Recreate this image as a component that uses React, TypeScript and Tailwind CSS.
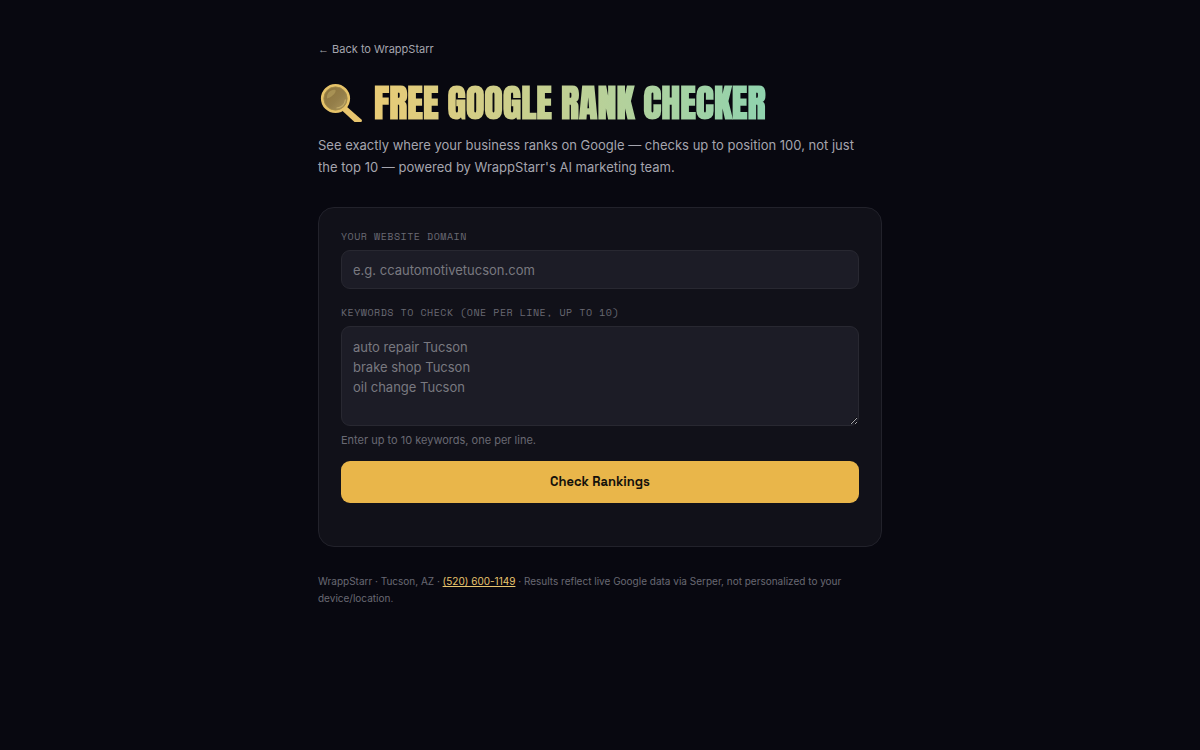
import React, { useState } from 'react';

const fieldClass =
  'block w-full rounded-[9px] border border-[#282831] bg-[#1c1c26] px-[11px] text-[13px] leading-5 text-[#f0f0f5] outline-none placeholder:text-[#797980] focus:border-[#e9b64a]';

const labelClass =
  "block text-[10px] leading-4 tracking-wider uppercase text-[#696973] font-['Space_Mono','Liberation_Mono',monospace]";

function MagnifierIcon() {
  return (
    <svg width="44" height="40" viewBox="0 0 44 40" className="shrink-0" aria-hidden="true">
      <defs>
        <linearGradient id="lens" x1="0" y1="0" x2="1" y2="1">
          <stop offset="0" stopColor="#8b7138" />
          <stop offset="0.55" stopColor="#947e49" />
          <stop offset="1" stopColor="#b19a60" />
        </linearGradient>
      </defs>
      <path d="M24 27.500 28.500 23.500 44 37 43.500 39 36.500 39Z" fill="#e8c56e" />
      <circle cx="17.5" cy="15.5" r="13.2" fill="url(#lens)" stroke="#e6c369" strokeWidth="2.8" />
      <circle cx="17.5" cy="15.5" r="11.6" fill="none" stroke="#a28b4d" strokeWidth="0.8" />
      <path d="M9 15.500c-1-5 4-9.500 8.500-8.500 1 3-4.500 7.500-8.500 8.500Z" fill="#b7a261" opacity="0.6" />
      <path d="M18.500 25c4.500 0 8.500-3 9-8.500" fill="none" stroke="#c1aa69" strokeWidth="1.2" />
    </svg>
  );
}

export default function App() {
  const [domain, setDomain] = useState('');
  const [keywords, setKeywords] = useState('');

  return (
    <div className="min-h-screen bg-[#080810] font-['Inter',sans-serif] text-[#f0f0f5]">
      <main className="mx-auto max-w-[600px] px-[18px] pt-10 pb-16">
        <a href="#" className="block w-fit text-[11px] leading-[18px] text-[#a5a5ae]">
          <span className="font-['Liberation_Sans',sans-serif]">←</span> Back to WrappStarr
        </a>

        <h1 className="mt-5 flex h-[50px] w-fit items-center gap-3 whitespace-nowrap">
          <MagnifierIcon />
          <span className="bg-linear-to-r from-[#e8cb76] to-[#8fd3ae] bg-clip-text text-[38px] leading-[48px] font-black text-transparent uppercase font-['Anton','Liberation_Sans',sans-serif]">
            Free Google Rank Checker
          </span>
        </h1>

        <p className="mt-[6px] max-w-[552px] text-[13px] leading-[22px] text-[#a5a5ae]">
          See exactly where your business ranks on Google — checks up to position 100, not just the top
          10 — powered by WrappStarr's AI marketing team.
        </p>

        <form
          onSubmit={(e) => e.preventDefault()}
          className="mt-[29px] rounded-2xl border border-[#22222b] bg-[#111119] px-[22px] pt-[21px] pb-[43px]"
        >
          <label htmlFor="domain" className={labelClass}>
            Your website domain
          </label>
          <input
            id="domain"
            type="text"
            value={domain}
            onChange={(e) => setDomain(e.target.value)}
            placeholder="e.g. ccautomotivetucson.com"
            className={`${fieldClass} mt-[5px] h-[39px]`}
          />

          <label htmlFor="keywords" className={`${labelClass} mt-4`}>
            Keywords to check (one per line, up to 10)
          </label>
          <textarea
            id="keywords"
            value={keywords}
            onChange={(e) => setKeywords(e.target.value)}
            placeholder={'auto repair Tucson\nbrake shop Tucson\noil change Tucson'}
            className={`${fieldClass} mt-[5px] h-[100px] resize-y py-[10px]`}
          />
          <p className="mt-1 text-[11px] leading-5 text-[#696973]">Enter up to 10 keywords, one per line.</p>

          <button
            type="submit"
            className="mt-[11px] block h-[42px] w-full cursor-pointer rounded-[9px] bg-[#e9b64a] text-[13px] font-bold text-[#14110a] font-['Space_Grotesk','Inter',sans-serif]"
          >
            Check Rankings
          </button>
        </form>

        <footer className="mt-[26px] text-[10px] leading-[17px] text-[#696973]">
          WrappStarr · Tucson, AZ ·{' '}
          <a href="tel:+15206001149" className="text-[#e8c56e] underline">
            (520) 600-1149
          </a>{' '}
          · Results reflect live Google data via Serper, not personalized to your device/location.
        </footer>
      </main>
    </div>
  );
}
